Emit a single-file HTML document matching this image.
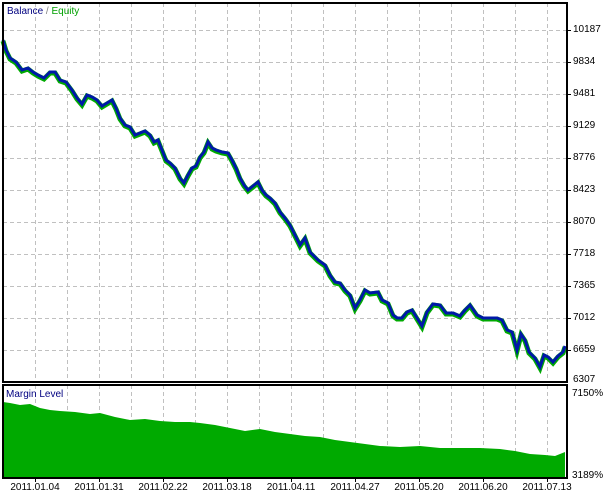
<!DOCTYPE html>
<html><head><style>
html,body{margin:0;padding:0;background:#fff;width:605px;height:493px;overflow:hidden}
svg{display:block}
text{font-family:"Liberation Sans",sans-serif;font-size:10px;fill:#000}
</style></head><body>
<svg width="605" height="493" xmlns="http://www.w3.org/2000/svg">
<g stroke="#c0c0c0" stroke-dasharray="4,3" stroke-width="1">
<line x1="35.5" y1="3" x2="35.5" y2="382"/><line x1="67.5" y1="3" x2="67.5" y2="382"/><line x1="99.5" y1="3" x2="99.5" y2="382"/><line x1="131.5" y1="3" x2="131.5" y2="382"/><line x1="163.5" y1="3" x2="163.5" y2="382"/><line x1="195.5" y1="3" x2="195.5" y2="382"/><line x1="227.5" y1="3" x2="227.5" y2="382"/><line x1="259.5" y1="3" x2="259.5" y2="382"/><line x1="291.5" y1="3" x2="291.5" y2="382"/><line x1="323.5" y1="3" x2="323.5" y2="382"/><line x1="355.5" y1="3" x2="355.5" y2="382"/><line x1="387.5" y1="3" x2="387.5" y2="382"/><line x1="419.5" y1="3" x2="419.5" y2="382"/><line x1="451.5" y1="3" x2="451.5" y2="382"/><line x1="483.5" y1="3" x2="483.5" y2="382"/><line x1="515.5" y1="3" x2="515.5" y2="382"/><line x1="547.5" y1="3" x2="547.5" y2="382"/>
<line x1="3" y1="30.5" x2="567" y2="30.5"/><line x1="3" y1="62.5" x2="567" y2="62.5"/><line x1="3" y1="94.5" x2="567" y2="94.5"/><line x1="3" y1="126.5" x2="567" y2="126.5"/><line x1="3" y1="158.5" x2="567" y2="158.5"/><line x1="3" y1="190.5" x2="567" y2="190.5"/><line x1="3" y1="222.5" x2="567" y2="222.5"/><line x1="3" y1="254.5" x2="567" y2="254.5"/><line x1="3" y1="286.5" x2="567" y2="286.5"/><line x1="3" y1="318.5" x2="567" y2="318.5"/><line x1="3" y1="350.5" x2="567" y2="350.5"/>
<line x1="35.5" y1="385" x2="35.5" y2="478"/><line x1="67.5" y1="385" x2="67.5" y2="478"/><line x1="99.5" y1="385" x2="99.5" y2="478"/><line x1="131.5" y1="385" x2="131.5" y2="478"/><line x1="163.5" y1="385" x2="163.5" y2="478"/><line x1="195.5" y1="385" x2="195.5" y2="478"/><line x1="227.5" y1="385" x2="227.5" y2="478"/><line x1="259.5" y1="385" x2="259.5" y2="478"/><line x1="291.5" y1="385" x2="291.5" y2="478"/><line x1="323.5" y1="385" x2="323.5" y2="478"/><line x1="355.5" y1="385" x2="355.5" y2="478"/><line x1="387.5" y1="385" x2="387.5" y2="478"/><line x1="419.5" y1="385" x2="419.5" y2="478"/><line x1="451.5" y1="385" x2="451.5" y2="478"/><line x1="483.5" y1="385" x2="483.5" y2="478"/><line x1="515.5" y1="385" x2="515.5" y2="478"/><line x1="547.5" y1="385" x2="547.5" y2="478"/>
</g>
<polygon fill="#00aa00" points="3,402 10,403 20,405 30,404 40,408 50,410 60,411 75,412 90,414 100,413 115,417 130,420 145,419 160,421 175,422 190,422 200,423 215,425 230,428 245,431 260,429 275,432 290,434 305,436 320,437 335,440 350,442 365,444 380,446 400,447 420,446 440,448 460,448 480,448 500,449 515,451 530,454 545,455 555,456 565,452 565,478 3,478"/>
<polyline fill="none" stroke="#00aa00" stroke-width="5" stroke-linejoin="miter" points="3,40 6,50 10,58 16,62 22,70 28,68 33,72 38,75 44,78 50,72 55,72 60,80 66,82 72,90 77,98 82,104 87,95 92,97 97,100 102,106 107,103 112,100 116,108 120,118 125,125 130,127 135,135 140,133 145,131 150,135 154,142 158,140 162,150 166,160 170,163 175,168 180,178 184,183 188,175 192,168 196,166 200,157 204,152 208,142 212,148 216,150 222,152 228,153 232,160 236,168 240,178 244,185 248,190 253,186 258,182 262,190 266,195 270,198 275,203 280,212 285,218 290,225 295,235 300,245 305,238 310,252 318,260 325,265 330,275 335,282 340,283 345,290 350,295 355,308 360,300 365,290 370,293 378,292 382,300 388,303 393,315 397,318 402,318 407,312 412,310 417,318 422,326 427,312 433,304 440,305 446,313 453,313 460,316 465,310 470,305 477,315 483,318 490,318 497,318 502,320 507,330 512,332 517,350 521,334 525,340 529,352 535,358 540,367 544,355 548,357 553,362 558,356 563,352 565,346" transform="translate(0,1)"/>
<polyline fill="none" stroke="#0018a8" stroke-width="3" stroke-linejoin="miter" points="3,40 6,50 10,58 16,62 22,70 28,68 33,72 38,75 44,78 50,72 55,72 60,80 66,82 72,90 77,98 82,104 87,95 92,97 97,100 102,106 107,103 112,100 116,108 120,118 125,125 130,127 135,135 140,133 145,131 150,135 154,142 158,140 162,150 166,160 170,163 175,168 180,178 184,183 188,175 192,168 196,166 200,157 204,152 208,142 212,148 216,150 222,152 228,153 232,160 236,168 240,178 244,185 248,190 253,186 258,182 262,190 266,195 270,198 275,203 280,212 285,218 290,225 295,235 300,245 305,238 310,252 318,260 325,265 330,275 335,282 340,283 345,290 350,295 355,308 360,300 365,290 370,293 378,292 382,300 388,303 393,315 397,318 402,318 407,312 412,310 417,318 422,326 427,312 433,304 440,305 446,313 453,313 460,316 465,310 470,305 477,315 483,318 490,318 497,318 502,320 507,330 512,332 517,350 521,334 525,340 529,352 535,358 540,367 544,355 548,357 553,362 558,356 563,352 565,346"/>
<g fill="none" stroke="#000" stroke-width="2">
<rect x="3" y="3" width="564" height="379"/>
<rect x="3" y="385" width="564" height="93"/>
</g>
<g stroke="#000" stroke-width="1">
<line x1="567" y1="30.5" x2="571" y2="30.5"/><line x1="567" y1="62.5" x2="571" y2="62.5"/><line x1="567" y1="94.5" x2="571" y2="94.5"/><line x1="567" y1="126.5" x2="571" y2="126.5"/><line x1="567" y1="158.5" x2="571" y2="158.5"/><line x1="567" y1="190.5" x2="571" y2="190.5"/><line x1="567" y1="222.5" x2="571" y2="222.5"/><line x1="567" y1="254.5" x2="571" y2="254.5"/><line x1="567" y1="286.5" x2="571" y2="286.5"/><line x1="567" y1="318.5" x2="571" y2="318.5"/><line x1="567" y1="350.5" x2="571" y2="350.5"/>
<line x1="35.5" y1="478" x2="35.5" y2="482"/><line x1="99.5" y1="478" x2="99.5" y2="482"/><line x1="163.5" y1="478" x2="163.5" y2="482"/><line x1="227.5" y1="478" x2="227.5" y2="482"/><line x1="291.5" y1="478" x2="291.5" y2="482"/><line x1="355.5" y1="478" x2="355.5" y2="482"/><line x1="419.5" y1="478" x2="419.5" y2="482"/><line x1="483.5" y1="478" x2="483.5" y2="482"/><line x1="547.5" y1="478" x2="547.5" y2="482"/>
</g>
<text x="7" y="14"><tspan style="fill:#000080">Balance</tspan><tspan style="fill:#808080"> / </tspan><tspan style="fill:#00a000">Equity</tspan></text>
<text x="6" y="397" style="fill:#000080">Margin Level</text>
<g>
<text x="573" y="32">10187</text><text x="573" y="64">9834</text><text x="573" y="96">9481</text><text x="573" y="128">9129</text><text x="573" y="160">8776</text><text x="573" y="192">8423</text><text x="573" y="224">8070</text><text x="573" y="256">7718</text><text x="573" y="288">7365</text><text x="573" y="320">7012</text><text x="573" y="352">6659</text><text x="573" y="382">6307</text>
<text x="572" y="396">7150%</text><text x="572" y="478">3189%</text>
</g>
<g text-anchor="middle">
<text x="35" y="490">2011.01.04</text><text x="99" y="490">2011.01.31</text><text x="163" y="490">2011.02.22</text><text x="227" y="490">2011.03.18</text><text x="291" y="490">2011.04.11</text><text x="355" y="490">2011.04.27</text><text x="419" y="490">2011.05.20</text><text x="483" y="490">2011.06.20</text><text x="547" y="490">2011.07.13</text>
</g>
</svg>
</body></html>
